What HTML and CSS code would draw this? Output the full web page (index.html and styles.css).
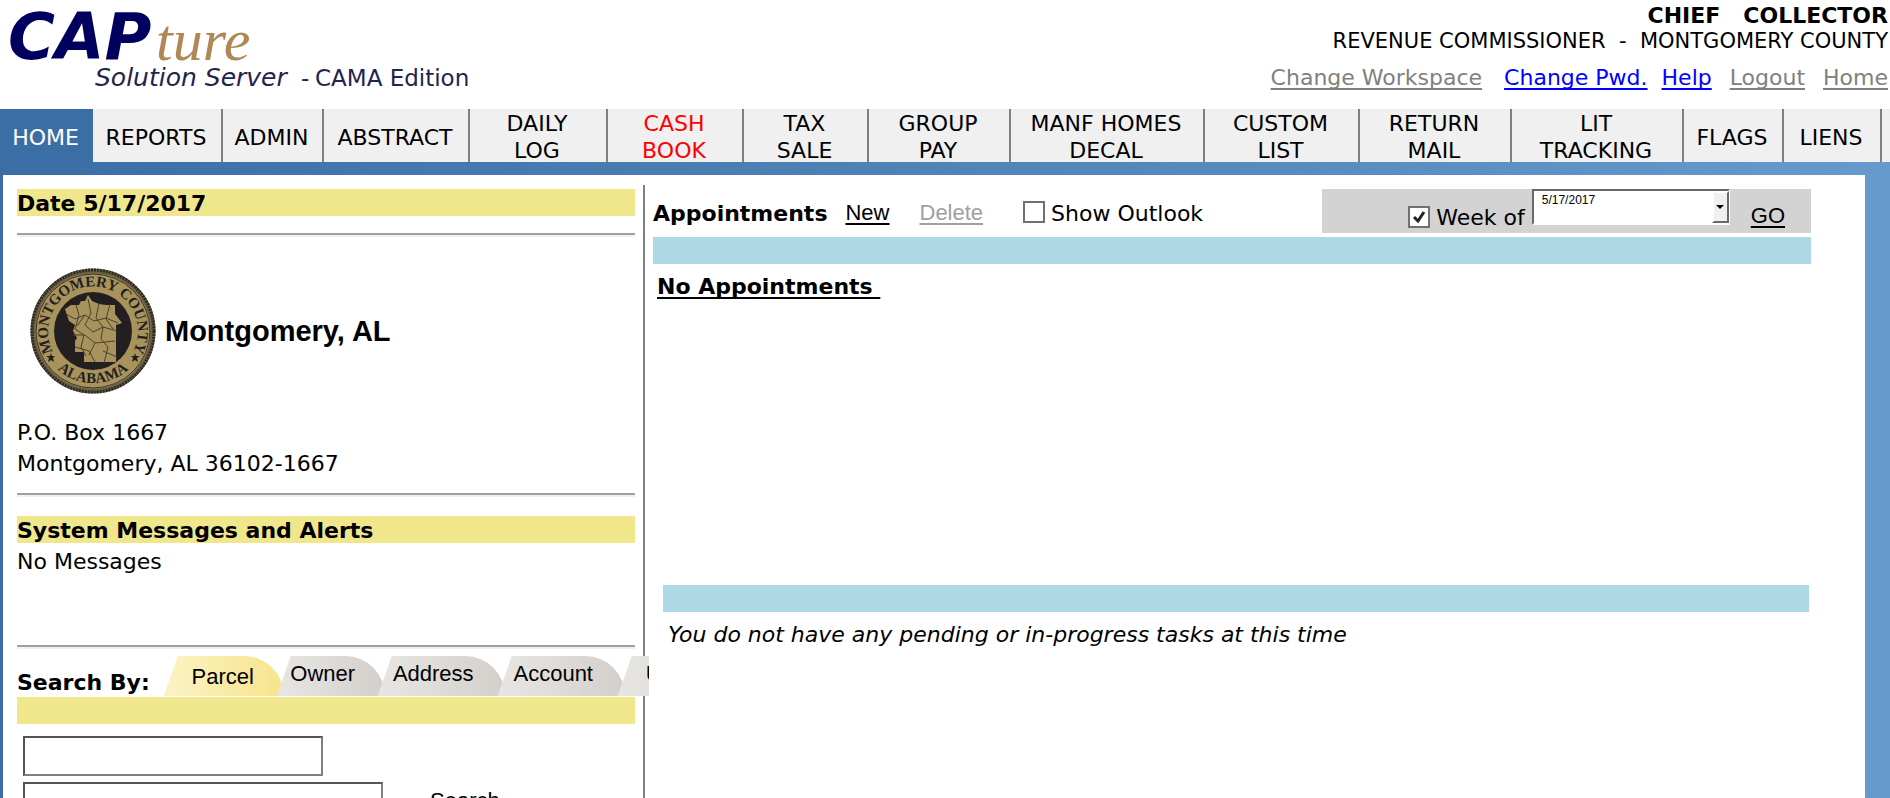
FILE: index.html
```html
<!doctype html>
<html lang="en">

<head>
    <title>CAPture Solution Server - CAMA Edition</title>
    <meta charset="utf-8" />
    <meta name="viewport" content="width=device-width, initial-scale=1.0">
    <link rel="stylesheet" href="styles.css">
</head>

<body>
    <header class="header">
        <svg class="logo" width="480" height="109" viewBox="0 0 480 109" role="img" aria-label="CAPture Solution Server - CAMA Edition">
            <text class="logo-cap" x="8" y="59">CAP</text>
            <text class="logo-ture" x="156" y="60">ture</text>
            <text class="logo-sub logo-server" x="95" y="86">Solution Server</text>
            <text class="logo-sub" x="301" y="86">-</text>
            <text class="logo-sub" x="315" y="86">CAMA Edition</text>
        </svg>
        <div class="user">
            <div class="user-name">CHIEF &nbsp; COLLECTOR</div>
            <div class="user-role">REVENUE COMMISSIONER &nbsp;-&nbsp; MONTGOMERY COUNTY</div>
            <div class="user-links">
                <a class="muted wide" href="#">Change Workspace</a>
                <a href="#">Change Pwd.</a>
                <a href="#">Help</a>
                <a class="muted" href="#">Logout</a>
                <a class="muted" href="#">Home</a>
            </div>
        </div>
    </header>

    <nav class="nav">
        <a class="active" href="#">HOME</a>
        <a href="#">REPORTS</a>
        <a href="#">ADMIN</a>
        <a href="#">ABSTRACT</a>
        <a href="#">DAILY<br>LOG</a>
        <a class="red" href="#">CASH<br>BOOK</a>
        <a href="#">TAX<br>SALE</a>
        <a href="#">GROUP<br>PAY</a>
        <a href="#">MANF HOMES<br>DECAL</a>
        <a href="#">CUSTOM<br>LIST</a>
        <a href="#">RETURN<br>MAIL</a>
        <a href="#">LIT<br>TRACKING</a>
        <a href="#">FLAGS</a>
        <a href="#">LIENS</a>
        <span></span>
    </nav>

    <div class="frame">
        <main class="page">
            <section class="side">
                <h2 class="band">Date 5/17/2017</h2>
                <hr>
                <div class="county">
                    <svg class="seal" width="128" height="128" viewBox="-64 -64 128 128" role="img" aria-label="Montgomery County Alabama seal">
                        <defs>
                            <path id="arc-top" d="M-37 26A45 45 0 1 1 37 26" />
                            <path id="arc-bottom" d="M-45 27A53 53 0 0 0 45 27" />
                        </defs>
                        <circle r="60" fill="#a8935c" stroke="#6b6046" stroke-width="5" />
                        <circle r="61" fill="none" stroke="#2c2822" stroke-width="3" stroke-dasharray="2 1" />
                        <circle r="57" fill="none" stroke="#3a342a" stroke-width="1" />
                        <circle r="39" fill="#231f20" />
                        <path fill="#a8935c" d="M-28-22l6-4 8 0 2-4 4 0 3-6 4 6 7 3 7 1 9 0 0 9 7 9-6 2 0 37-32 0 0-10-9 0 0-11 2-3-4-7 2-6-6-4z" />
                        <path fill="none" stroke="#4a4130" d="M-27-17l9 5 10-4 9 6 12-3 12 5M-17-26l3 10-4 14 9 6-3 12 5 9M-5-32l3 14-6 12 8 7 10-5 14 4M6-28l-3 15 7 9-2 12 7 8-4 16M-20 4l12 0 10 8 20-2M-18 16l14 4 6 11M17-27l-4 15 7 10M-8-16l-8 11M2 12l-6 12M10 20l14 6" />
                        <text class="seal-text"><textPath href="#arc-top" startOffset="50%">MONTGOMERY COUNTY</textPath></text>
                        <text class="seal-text"><textPath href="#arc-bottom" startOffset="50%">ALABAMA</textPath></text>
                        <path fill="#231f20" d="M-42 22l1 3 3 0-2 2 1 4-3-2-3 2 1-4-3-2 4 0zM42 22l1 3 4 0-3 2 1 4-3-2-3 2 1-4-2-2 3 0z" />
                    </svg>
                    <strong>Montgomery, AL</strong>
                </div>
                <p class="lines">P.O. Box 1667<br>Montgomery, AL 36102-1667</p>
                <hr>
                <h2 class="band">System Messages and Alerts</h2>
                <p class="lines messages">No Messages</p>
                <hr>
                <div class="search-head">
                    <h2>Search By:</h2>
                    <div class="tabs">
                        <button class="tab selected" type="button">Parcel</button>
                        <button class="tab owner" type="button">Owner</button>
                        <button class="tab" type="button">Address</button>
                        <button class="tab" type="button">Account</button>
                        <button class="tab cut" type="button">User</button>
                    </div>
                </div>
                <div class="band"></div>
                <form class="search">
                    <input class="parcel-type" type="text" aria-label="Parcel type">
                    <input class="parcel-number" type="text" aria-label="Parcel number">
                    <button class="search-button" type="button">Search</button>
                </form>
            </section>

            <section class="work">
                <div class="toolbar">
                    <h2>Appointments</h2>
                    <a class="plain new" href="#">New</a>
                    <a class="plain off" href="#">Delete</a>
                    <label class="outlook"><input class="check" type="checkbox">Show Outlook</label>
                    <div class="week">
                        <label><input class="check" type="checkbox" checked>Week of</label>
                        <div class="date">
                            <select aria-label="Week">
                                <option>5/17/2017</option>
                            </select>
                            <span class="arrow"></span>
                        </div>
                        <a class="plain go" href="#">GO</a>
                    </div>
                </div>
                <div class="bar"></div>
                <h3 class="empty">No Appointments&nbsp;</h3>
                <div class="tasks">
                    <div class="bar"></div>
                    <p>You do not have any pending or in-progress tasks at this time</p>
                </div>
            </section>
        </main>
    </div>
</body>

</html>
```
FILE: styles.css
```css
* { box-sizing: border-box; }
html { height: 100%; }
body { background-color: #fff; color: #000; display: flex; flex-direction: column; font-family: Verdana, "DejaVu Sans", sans-serif; font-size: 22px; height: 100%; line-height: 27px; margin: 0; overflow: hidden; }
h2, h3, p { font-size: 22px; margin: 0; }
button, input, select { font-family: "Liberation Sans", Arial, sans-serif; font-size: 22px; }
a { color: #00f; text-decoration-thickness: 2px; text-underline-offset: 3px; text-decoration-skip-ink: none; }

.header { display: flex; flex-shrink: 0; height: 109px; justify-content: space-between; }
.logo-cap { fill: #00005f; font-size: 64px; font-style: italic; font-weight: bold; }
.logo-ture { fill: #b08858; font-family: "Liberation Serif", serif; font-size: 60px; font-style: italic; }
.logo-sub { fill: #23234f; font-size: 23px; }
.logo-server { font-size: 25px; font-style: italic; }
.user { padding: 2px 2px 0 0; text-align: right; white-space: nowrap; }
.user-name { font-weight: bold; }
.user-role { font-size: 21px; line-height: 24px; }
.user-links { display: flex; gap: 14px; justify-content: flex-end; margin-top: 11px; }
.user-links .muted { margin-left: 4px; }
.muted { color: #808080; }
.wide { margin-right: 8px; }

.nav { background-color: #808080; display: grid; flex-shrink: 0; gap: 2px; grid-template-columns: 91fr 128fr 99fr 144fr 136fr 134fr 123fr 140fr 192fr 153fr 150fr 170fr 98fr 96fr 8fr; height: 53px; }
.nav > * { align-items: center; background-color: #f0f0f0; color: #000; display: flex; justify-content: center; padding: 1px 2px 0 0; text-align: center; text-decoration: none; }
.nav .active { background-color: #3a6ea5; color: #fff; margin-right: -2px; }
.nav .red { color: #f00; }

.frame { background: linear-gradient(90deg, #3a6ea5, #69c); display: flex; flex-grow: 1; min-height: 0; padding: 13px 25px 0 3px; }
.page { background-color: #fff; display: grid; flex-grow: 1; grid-template-columns: 640fr 1222fr; padding-top: 10px; }

.side { padding: 4px 8px 0 14px; min-width: 0; }
.band { background-color: #f0e68c; height: 27px; line-height: 29px; }
hr { border: 0; border-bottom: 2px solid #f0f0f0; border-top: 2px solid #a0a0a0; margin: 17px 0 19px; }
.county { align-items: center; display: flex; font-family: "Liberation Sans", Arial, sans-serif; font-size: 29px; gap: 8px; margin: 30px 0 22px 12px; }
.seal-text { fill: #231f20; font-family: "Liberation Serif", serif; font-size: 15px; font-weight: bold; text-anchor: middle; }
.lines { line-height: 31px; margin-bottom: -3px; }
.messages { height: 88px; padding-top: 3px; }
.search-head { align-items: flex-end; display: flex; gap: 14px; height: 41px; margin-top: -12px; white-space: nowrap; }
.search-head h2 { padding-bottom: 1px; }
.tabs { display: flex; flex-grow: 1; height: 41px; margin-right: -14px; min-width: 0; overflow: hidden; position: relative; z-index: 1; }
.tab { background: linear-gradient(90deg, #e8e6e4, #d3d0cb); border: 0; border-radius: 0 40px 0 0 / 0 40px 0 0; clip-path: polygon(14px 0, 100% 0, 100% 100%, 0 100%); flex: 0 0 127px; height: 40px; margin-left: -7px; padding: 0 16px 4px 0; }
.tab.owner { flex-basis: 108px; }
.tab.selected { background: linear-gradient(90deg, #fbf3c5, #f7e48a); flex-basis: 120px; margin-left: 0; padding: 2px 2px 0 0; position: relative; }
.tab.cut { padding-left: 28px; text-align: left; }
.search { align-items: flex-start; display: flex; flex-wrap: wrap; gap: 6px 47px; padding: 12px 0 0 6px; }
.search input { border: 2px solid #808080; border-left-color: #555; border-top-color: #555; height: 40px; }
.parcel-type { margin-right: 200px; width: 300px; }
.parcel-number { width: 360px; }
.search-button { background: none; border: 0; padding: 6px 0 0; }

.work { border-left: 2px solid #808080; padding: 4px 54px 0 8px; }
.toolbar { align-items: center; display: flex; height: 44px; padding-top: 4px; white-space: nowrap; }
.plain { color: #000; font-family: "Liberation Sans", Arial, sans-serif; }
.new { margin-left: 18px; }
.new, .off { margin-bottom: 2px; }
.off { color: #a0a0a0; margin-left: 30px; }
label { align-items: center; display: flex; gap: 6px; }
.outlook { margin-left: 40px; }
.check { appearance: none; background-color: #fff; border: 2px solid #707070; height: 22px; margin: 0 0 2px; width: 22px; }
.check:checked { background: #fff url("data:image/svg+xml,%3Csvg xmlns='http://www.w3.org/2000/svg' viewBox='0 0 18 18'%3E%3Cpath d='M4 9l4 4 6-9' fill='none' stroke='%23222' stroke-width='3'/%3E%3C/svg%3E"); }
.week { align-items: flex-start; background-color: #d3d3d3; display: flex; height: 44px; margin: -4px 0 0 auto; padding-right: 26px; width: 489px; justify-content: flex-end; }
.week label { margin-right: 7px; padding-top: 15px; }
.date { position: relative; }
.date select { appearance: none; background-color: #fff; border: 2px solid #fff; border-left-color: #696969; border-radius: 0; border-top-color: #696969; display: block; font-size: 12px; height: 36px; padding: 0 8px 14px; width: 198px; }
.arrow { align-items: center; background-color: #f0f0f0; border: 2px solid #fff; border-bottom-color: #696969; border-right-color: #696969; bottom: 2px; display: flex; justify-content: center; pointer-events: none; position: absolute; right: 1px; top: 2px; width: 17px; }
.arrow::after { border: 4px solid transparent; border-bottom: 0; border-top-color: #000; content: ""; }
.go { margin: 13px 0 0 21px; }
.bar { background-color: #add8e6; height: 27px; margin-top: 4px; }
.empty { margin: 9px 4px 0; text-decoration: underline 2px; text-decoration-skip-ink: none; text-underline-offset: 3px; }
.tasks { margin: 285px 2px 0 10px; }
.tasks p { font-style: italic; padding: 9px 5px; }
```
